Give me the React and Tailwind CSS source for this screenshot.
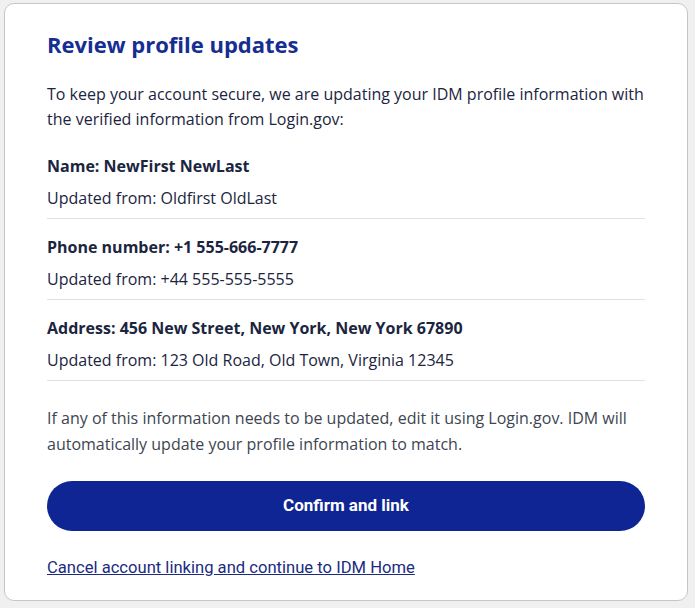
export default function App() {
  const items = [
    { label: "Name: NewFirst NewLast", old: "Updated from: Oldfirst OldLast" },
    { label: "Phone number: +1 555-666-7777", old: "Updated from: +44 555-555-5555" },
    { label: "Address: 456 New Street, New York, New York 67890", old: "Updated from: 123 Old Road, Old Town, Virginia 12345" },
  ];
  return (
    <div className="h-[608px] w-[695px] bg-[#f0f0f0] pt-[3px] pr-[7px] pl-[4px] font-['Open_Sans',sans-serif]">
      <div className="rounded-[10px] border border-[#c6c6c6] bg-white px-[42px] pt-[25px] pb-[20px]">
        <h1 className="text-[22px] font-bold leading-[30px] text-[#162e91]">Review profile updates</h1>
        <p className="mt-[23px] text-[16px] leading-[25px] text-[#1b2540]">
          To keep your account secure, we are updating your IDM profile information with the verified information from Login.gov:
        </p>
        <div className="mt-[6px]">
          {items.map((it) => (
            <div key={it.label} className="border-b border-[#dfe1e2] pt-[16px] pb-[8px]">
              <div className="text-[16px] font-bold leading-[24px] text-[#1b2540]">{it.label}</div>
              <div className="mt-[8px] text-[16px] leading-[24px] text-[#1b2540]">{it.old}</div>
            </div>
          ))}
        </div>
        <p className="mt-[24px] text-[16px] leading-[26px] text-[#3d4551]">
          If any of this information needs to be updated, edit it using Login.gov. IDM will automatically update your profile information to match.
        </p>
        <button className="mt-[24px] flex h-[50px] w-full items-center justify-center rounded-full bg-[#0f2594] font-['Roboto',sans-serif] text-[17px] font-bold text-white">
          Confirm and link
        </button>
        <div className="mt-[24px]">
          <a href="#" className="font-['Roboto',sans-serif] text-[16.6px] leading-[24px] text-[#1a2b80] underline">
            Cancel account linking and continue to IDM Home
          </a>
        </div>
      </div>
    </div>
  );
}
